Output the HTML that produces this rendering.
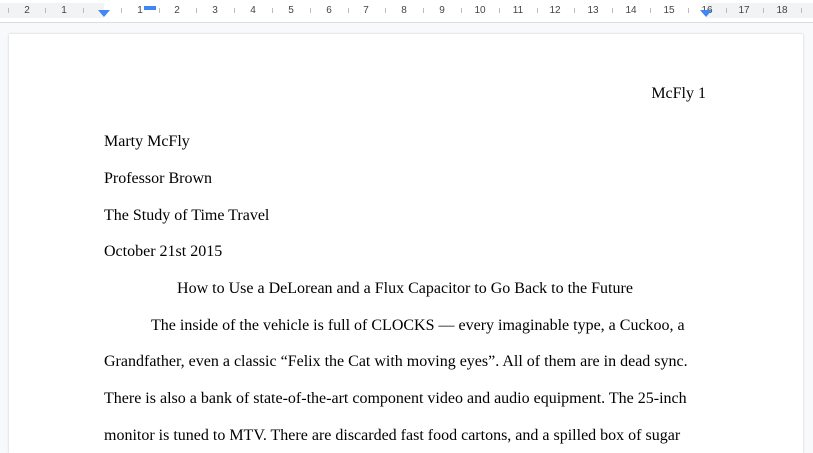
<!DOCTYPE html>
<html><head><meta charset="utf-8"><style>
html,body{margin:0;width:813px;height:453px;overflow:hidden;}
body{background:#f8f9fa;position:relative;font-family:"Liberation Serif",serif;}
#ruler{position:absolute;left:0;top:0;width:813px;height:22px;background:#fff;border-bottom:1px solid #dadce0;}
.rm{position:absolute;top:3px;height:15px;background:#f1f3f4;}
.rw{position:absolute;top:3px;height:15px;background:#fff;}
.n{position:absolute;top:5px;font:10px "Liberation Sans",sans-serif;color:#444;transform:translateX(-50%);}
.t{position:absolute;top:8px;width:1px;height:5px;background:#bbb;}
#page{position:absolute;left:9px;top:34px;width:794px;height:419px;background:#fff;box-shadow:0 0 2px rgba(60,64,67,.25);}
.l{position:absolute;font-size:16px;line-height:20px;color:#000;white-space:nowrap;}
</style></head><body>
<div id="ruler">
<div class="rm" style="left:0;width:104px"></div>
<div class="rw" style="left:104px;width:602px"></div>
<div class="rm" style="left:706px;width:107px"></div>
<div class="n" style="left:27px">2</div><div class="n" style="left:64px">1</div>
<div class="n" style="left:140px">1</div><div class="n" style="left:177px">2</div><div class="n" style="left:215px">3</div><div class="n" style="left:253px">4</div><div class="n" style="left:291px">5</div><div class="n" style="left:329px">6</div><div class="n" style="left:366px">7</div><div class="n" style="left:404px">8</div><div class="n" style="left:442px">9</div><div class="n" style="left:480px">10</div><div class="n" style="left:518px">11</div><div class="n" style="left:555px">12</div><div class="n" style="left:593px">13</div><div class="n" style="left:631px">14</div><div class="n" style="left:669px">15</div><div class="n" style="left:707px">16</div><div class="n" style="left:744px">17</div><div class="n" style="left:782px">18</div>
<div class="t" style="left:8px"></div><div class="t" style="left:45px"></div><div class="t" style="left:83px"></div><div class="t" style="left:121px"></div><div class="t" style="left:159px"></div><div class="t" style="left:196px"></div><div class="t" style="left:234px"></div><div class="t" style="left:272px"></div><div class="t" style="left:310px"></div><div class="t" style="left:348px"></div><div class="t" style="left:385px"></div><div class="t" style="left:423px"></div><div class="t" style="left:461px"></div><div class="t" style="left:499px"></div><div class="t" style="left:537px"></div><div class="t" style="left:574px"></div><div class="t" style="left:612px"></div><div class="t" style="left:650px"></div><div class="t" style="left:688px"></div><div class="t" style="left:726px"></div><div class="t" style="left:763px"></div><div class="t" style="left:801px"></div>
<div style="position:absolute;left:144px;top:6px;width:12px;height:4px;background:#4285f4"></div>
<div style="position:absolute;left:98px;top:10px;width:0;height:0;border-left:6px solid transparent;border-right:6px solid transparent;border-top:7px solid #4285f4"></div>
<div style="position:absolute;left:700px;top:10px;width:0;height:0;border-left:6px solid transparent;border-right:6px solid transparent;border-top:7px solid #4285f4"></div>
</div>
<div id="page"></div>
<div class="l" style="right:107px;top:84px">McFly 1</div>
<div class="l" style="left:104px;top:132px">Marty McFly</div>
<div class="l" style="left:104px;top:169px">Professor Brown</div>
<div class="l" style="left:104px;top:206px">The Study of Time Travel</div>
<div class="l" style="left:104px;top:242px">October 21st 2015</div>
<div class="l" style="left:104px;width:602px;text-align:center;top:279px">How to Use a DeLorean and a Flux Capacitor to Go Back to the Future</div>
<div class="l" style="left:151px;top:316px">The inside of the vehicle is full of CLOCKS — every imaginable type, a Cuckoo, a</div>
<div class="l" style="left:104px;top:352px">Grandfather, even a classic “Felix the Cat with moving eyes”. All of them are in dead sync.</div>
<div class="l" style="left:104px;top:389px">There is also a bank of state-of-the-art component video and audio equipment. The 25-inch</div>
<div class="l" style="left:104px;top:426px">monitor is tuned to MTV. There are discarded fast food cartons, and a spilled box of sugar</div>
</body></html>
